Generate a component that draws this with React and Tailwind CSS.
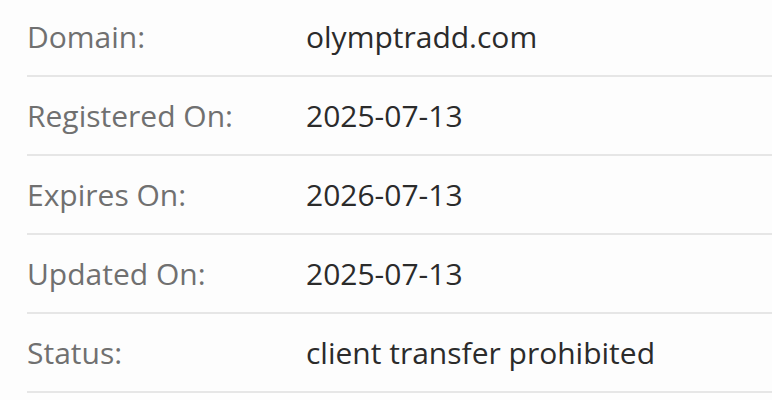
const ROWS = [
  { label: 'Domain:', value: 'olymptradd.com' },
  { label: 'Registered On:', value: '2025-07-13' },
  { label: 'Expires On:', value: '2026-07-13' },
  { label: 'Updated On:', value: '2025-07-13' },
  { label: 'Status:', value: 'client transfer prohibited' },
];

export default function App() {
  return (
    <div className="h-[400px] w-[772px] overflow-hidden bg-[#fdfdfd] pl-[27px] font-['Open_Sans',sans-serif]">
      <div className="-mt-[2px]">
        {ROWS.map((r) => (
          <div
            key={r.label}
            className="grid h-[79px] grid-cols-[279px_1fr] items-center border-b-2 border-[#e6e6e6] text-[30px] leading-[77px]"
          >
            <span className="text-[#707070]">{r.label}</span>
            <span className="text-[#2b2b2b]">{r.value}</span>
          </div>
        ))}
      </div>
    </div>
  );
}
